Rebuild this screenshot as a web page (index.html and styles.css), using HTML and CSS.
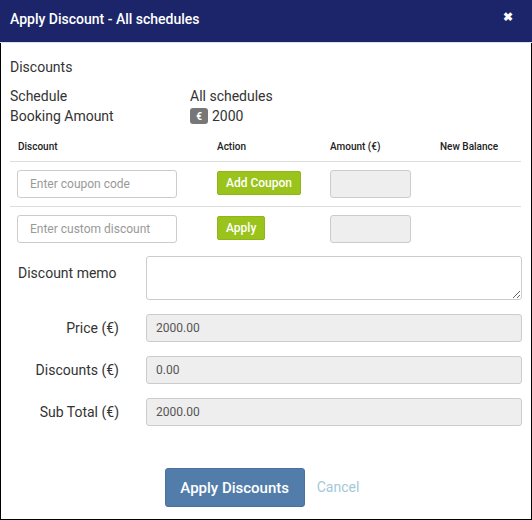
FILE: index.html
```html
<!DOCTYPE html>
<html>
<head>
<link rel="stylesheet" href="styles.css">
</head>
<body>
<div class="modal">
    <div class="modal-header">
        <span class="modal-title">Apply Discount - All schedules</span>
        <span class="modal-close">&#10006;</span>
    </div>

    <div class="modal-body">
        <div class="section-title">Discounts</div>

        <div class="info-row">
            <span class="info-label">Schedule</span>
            <span class="info-value">All schedules</span>
        </div>
        <div class="info-row">
            <span class="info-label">Booking Amount</span>
            <span class="info-value"><span class="currency-badge">&euro;</span> 2000</span>
        </div>

        <table class="discount-table">
            <thead>
                <tr>
                    <th class="col-discount">Discount</th>
                    <th class="col-action">Action</th>
                    <th class="col-amount">Amount (&euro;)</th>
                    <th>New Balance</th>
                </tr>
            </thead>
            <tbody>
                <tr>
                    <td><input class="text-input" type="text" placeholder="Enter coupon code"></td>
                    <td><button class="btn-green">Add Coupon</button></td>
                    <td><input class="amount-input" type="text" disabled></td>
                    <td></td>
                </tr>
                <tr>
                    <td><input class="text-input" type="text" placeholder="Enter custom discount"></td>
                    <td><button class="btn-green">Apply</button></td>
                    <td><input class="amount-input" type="text" disabled></td>
                    <td></td>
                </tr>
            </tbody>
        </table>

        <div class="form-rows">
            <div class="form-row">
                <label class="form-label memo-label">Discount memo</label>
                <textarea class="memo-input"></textarea>
            </div>
            <div class="form-row">
                <label class="form-label">Price (&euro;)</label>
                <input class="readonly-input" type="text" value="2000.00" disabled>
            </div>
            <div class="form-row">
                <label class="form-label">Discounts (&euro;)</label>
                <input class="readonly-input" type="text" value="0.00" disabled>
            </div>
            <div class="form-row">
                <label class="form-label">Sub Total (&euro;)</label>
                <input class="readonly-input" type="text" value="2000.00" disabled>
            </div>
        </div>

        <div class="modal-footer">
            <button class="btn-primary">Apply Discounts</button>
            <a class="btn-link">Cancel</a>
        </div>
    </div>
</div>
</body>
</html>
```

FILE: styles.css
```css
body {
    margin: 0;
    font-family: Roboto, "Liberation Sans", sans-serif;
    color: #333;
}

.modal {
    width: 532px;
    height: 520px;
    box-sizing: border-box;
    display: flex;
    flex-direction: column;
    background: #fff;
}

/* Header bar */
.modal-header {
    height: 42px;
    flex-shrink: 0;
    background: #1c2569;
    border-bottom: 1px solid #dde0ea;
    display: flex;
    align-items: center;
    justify-content: space-between;
    padding: 0 19px 0 10px;
    color: #fff;
}

.modal-title {
    font-size: 14px;
    font-weight: 500;
    margin-top: -4px;
}

.modal-close {
    font-size: 12px;
    font-weight: bold;
    margin-top: -8px;
}

.modal-body {
    flex: 1;
    border: 1px solid #000;
    border-top: none;
    padding: 16px 9px 0 9px;
    display: flex;
    flex-direction: column;
}

.section-title {
    font-size: 14px;
    margin-bottom: 11px;
}

.info-row {
    display: flex;
    font-size: 14px;
    height: 20px;
    align-items: center;
}

.info-label {
    width: 180px;
}

.info-value {
    display: flex;
    align-items: center;
    gap: 4px;
}

.currency-badge {
    display: inline-flex;
    align-items: center;
    justify-content: center;
    width: 18px;
    height: 16px;
    border-radius: 3px;
    background: #777;
    color: #fff;
    font-size: 10px;
    font-weight: bold;
}

/* Discount table */
.discount-table {
    width: 511px;
    margin-top: 8px;
    border-collapse: collapse;
    table-layout: fixed;
}

.discount-table th {
    text-align: left;
    font-size: 10px;
    font-weight: 500;
    color: #222;
    padding: 7px 8px 9px 8px;
    border-bottom: 1px solid #ddd;
}

.discount-table td {
    padding: 8px 7px 8px 7px;
    vertical-align: top;
}

.discount-table tbody tr:first-child td {
    border-bottom: 1px solid #ddd;
}

.col-discount {
    width: 183px;
}

.col-action {
    width: 97px;
}

.col-amount {
    width: 94px;
}

.text-input {
    width: 160px;
    height: 28px;
    box-sizing: border-box;
    border: 1px solid #ccc;
    border-radius: 3px;
    padding: 0 12px;
    font-family: Roboto, "Liberation Sans", sans-serif;
    font-size: 12px;
    color: #555;
}

.text-input::placeholder {
    color: #999;
}

.amount-input {
    width: 81px;
    height: 28px;
    box-sizing: border-box;
    border: 1px solid #ccc;
    border-radius: 3px;
    background: #eee;
    margin-left: 1px;
}

.btn-green {
    background: #9ac31c;
    color: #fff;
    border: 1px solid #8fb51a;
    border-radius: 2px;
    font-family: Roboto, "Liberation Sans", sans-serif;
    font-size: 12px;
    font-weight: 500;
    height: 24px;
    padding: 0 8px;
    margin-top: 1px;
    margin-left: 1px;
}

/* Totals form */
.form-rows {
    display: flex;
    flex-direction: column;
    gap: 14px;
    margin-top: 5px;
}

.form-row {
    display: flex;
    align-items: center;
}

.form-label {
    width: 109px;
    text-align: right;
    font-size: 14px;
    margin-right: 27px;
}

.memo-label {
    align-self: flex-start;
    margin-top: 9px;
    text-align: left;
    padding-left: 8px;
    box-sizing: border-box;
}

.memo-input {
    width: 376px;
    height: 44px;
    box-sizing: border-box;
    border: 1px solid #ccc;
    border-radius: 3px;
    resize: vertical;
    margin: 0;
}

.readonly-input {
    width: 376px;
    height: 28px;
    box-sizing: border-box;
    border: 1px solid #ccc;
    border-radius: 3px;
    background: #eee;
    padding: 0 9px;
    font-family: Roboto, "Liberation Sans", sans-serif;
    font-size: 12px;
    color: #555;
}

/* Footer buttons */
.modal-footer {
    display: flex;
    align-items: center;
    justify-content: center;
    gap: 12px;
    margin-top: 42px;
    padding-right: 8px;
}

.btn-primary {
    width: 140px;
    height: 39px;
    background: #527dab;
    color: #fff;
    border: 1px solid #4a72a0;
    border-radius: 3px;
    font-family: Roboto, "Liberation Sans", sans-serif;
    font-size: 15px;
    font-weight: 500;
}

.btn-link {
    color: #a3c8da;
    font-size: 14px;
    margin-top: -2px;
}
```
